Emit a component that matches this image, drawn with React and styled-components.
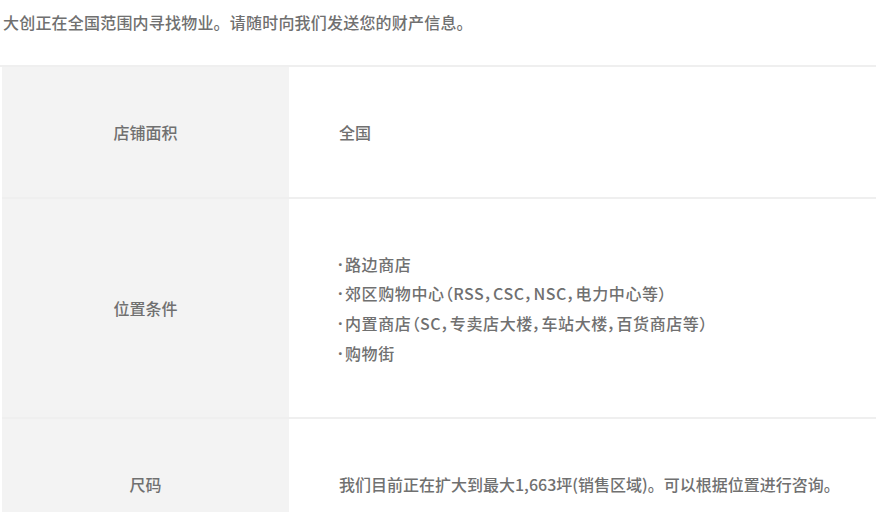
import React from "react"
import styled, { createGlobalStyle } from "styled-components"

const GlobalStyle = createGlobalStyle`
  html, body {
    margin: 0;
    padding: 0;
    background: #fff;
  }
  body {
    font-family: "Noto Sans CJK SC", "Noto Sans", sans-serif;
    color: #6e6e6e;
  }
`

const Page = styled.div`
  width: 876px;
  padding-top: 12px;
`

const Intro = styled.p`
  margin: 0 0 0 3px;
  font-size: 16px;
  line-height: 20px;
  font-weight: 500;
  color: #707070;
  letter-spacing: 0.2px;
`

const Table = styled.div`
  margin-top: 33px;
  border-top: 2px solid #efefef;
`

const Row = styled.div`
  display: grid;
  grid-template-columns: 287px 1fr;
  margin-left: 2px;
  border-bottom: 2px solid #efefef;
`

const Label = styled.div`
  background: #f3f3f3;
  display: flex;
  align-items: center;
  justify-content: center;
  font-size: 16px;
  font-weight: 500;
  color: #707070;
  padding: 50px 0;
  line-height: 30px;
`

const Value = styled.div`
  padding: 50px 0 50px 50px;
  font-size: 16px;
  font-weight: 500;
  line-height: 30px;
  color: #707070;
  display: flex;
  flex-direction: column;
  justify-content: center;
`

const Bullet = styled.div`
  display: flex;
  align-items: center;
  height: 29.6px;
  font-feature-settings: "palt";
  letter-spacing: 0.6px;
  &::before {
    content: "·";
    font-family: "Open Sans", sans-serif;
    font-weight: 700;
    line-height: 30px;
    width: 7px;
    margin-left: -1px;
    flex: none;
  }
`

const rows = [
  { label: "店铺面积", value: ["全国"] },
  {
    label: "位置条件",
    bullets: true,
    value: [
      "路边商店",
      "郊区购物中心（RSS，CSC，NSC，电力中心等）",
      "内置商店（SC，专卖店大楼，车站大楼，百货商店等）",
      "购物街",
    ],
  },
  { label: "尺码", value: ["我们目前正在扩大到最大1,663坪(销售区域)。可以根据位置进行咨询。"] },
]

export default function App() {
  return (
    <Page>
      <GlobalStyle />
      <Intro>大创正在全国范围内寻找物业。请随时向我们发送您的财产信息。</Intro>
      <Table>
        {rows.map(row => (
          <Row key={row.label}>
            <Label>{row.label}</Label>
            <Value>
              {row.value.map(v =>
                row.bullets ? (
                  <Bullet key={v}>
                    <span>{v}</span>
                  </Bullet>
                ) : (
                  <div key={v}>{v}</div>
                )
              )}
            </Value>
          </Row>
        ))}
      </Table>
    </Page>
  )
}
